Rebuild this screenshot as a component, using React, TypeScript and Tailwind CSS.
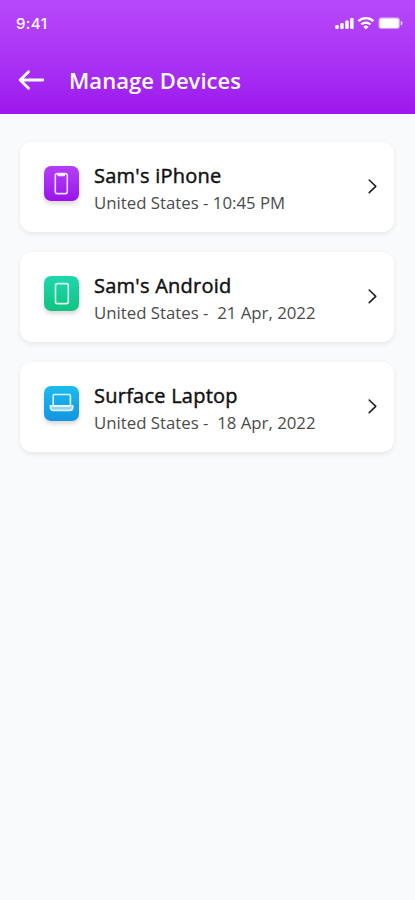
import React from "react";

type DeviceKind = "iphone" | "android" | "laptop";

interface Device {
  name: string;
  details: string;
  kind: DeviceKind;
}

const devices: Device[] = [
  { name: "Sam's iPhone", details: "United States - 10:45 PM", kind: "iphone" },
  { name: "Sam's Android", details: "United States -  21 Apr, 2022", kind: "android" },
  { name: "Surface Laptop", details: "United States -  18 Apr, 2022", kind: "laptop" },
];

const tileColors: Record<DeviceKind, string> = {
  iphone: "from-[#b43df8] to-[#9a10ea]",
  android: "from-[#20d7ae] to-[#10c380]",
  laptop: "from-[#1cbcee] to-[#1494e2]",
};

const StatusBar = () => (
  <div className="flex items-center justify-between pl-4 pr-3 h-[46px] text-white">
    <span className="font-['Inter'] text-[15px] font-medium leading-none tracking-[0.4px]">9:41</span>
    <svg width="70" height="16" viewBox="0 0 70 16" fill="currentColor">
      <rect x="2.3" y="10" width="3.4" height="4" rx="1" />
      <rect x="7.3" y="8" width="3.4" height="6" rx="1" />
      <rect x="12.3" y="5.5" width="3.4" height="8.5" rx="1" />
      <rect x="17.2" y="3" width="3.4" height="11" rx="1" />
      <g fill="none" stroke="currentColor" strokeWidth="2.4">
        <path d="M25.4 6.2a10.6 10.6 0 0 1 15 0" />
        <path d="M28.3 9.5a6.6 6.6 0 0 1 9.2 0" />
      </g>
      <path d="M30.3 11.8a3.6 3.6 0 0 1 5.2 0L32.9 14.6z" />
      <rect x="45.4" y="2.3" width="21.6" height="11.8" rx="3.4" opacity="0.45" />
      <rect x="46.6" y="3.4" width="19.2" height="9.6" rx="1.8" />
      <path d="M67.7 6c2.4.6 2.4 3.8 0 4.4z" opacity="0.75" />
    </svg>
  </div>
);

const Header = () => (
  <header className="h-[114px] bg-gradient-to-b from-[#b748fa] to-[#9d16ee]">
    <StatusBar />
    <div className="flex items-center h-[67px] pl-[18px] gap-6 text-white">
      <svg width="27" height="22" viewBox="0 0 27 22" fill="none" stroke="currentColor" strokeWidth="2.9" strokeLinecap="round" strokeLinejoin="round">
        <path d="M24.8 11H2.2M10.5 2.8L2.2 11l8.3 8.2" />
      </svg>
      <h1 className="text-[22px] font-semibold leading-none tracking-[0.05px]">Manage Devices</h1>
    </div>
  </header>
);

const DeviceIcon = ({ kind }: { kind: DeviceKind }) => (
  <div className={`size-[35px] shrink-0 rounded-[7px] bg-gradient-to-b shadow-[0_3px_4px_rgba(0,0,0,0.15)] ${tileColors[kind]}`}>
    <svg width="35" height="35" viewBox="0 0 35 35" fill="none" stroke="white" strokeWidth="1.6" strokeLinejoin="round" strokeOpacity="0.85">
      {kind === "iphone" && (
        <>
          <rect x="11.3" y="7.6" width="12" height="20" rx="1.8" />
          <path d="M14.3 8.2h6v1.2h-6z" />
        </>
      )}
      {kind === "android" && <rect x="11.5" y="7.6" width="12.8" height="20" rx="1.8" />}
      {kind === "laptop" && (
        <>
          <rect x="9.2" y="8.5" width="17.2" height="11.3" rx="1" />
          <path d="M6.4 19.8h22.4v1.8a2.9 2.9 0 0 1-2.9 2.9H9.3a2.9 2.9 0 0 1-2.9-2.9z" fill="white" fillOpacity="0.55" />
        </>
      )}
    </svg>
  </div>
);

const DeviceCard = ({ device }: { device: Device }) => (
  <li className="flex h-[90px] items-start rounded-xl bg-white pl-6 pr-4 shadow-[0_2px_5px_rgba(0,0,0,0.08)]">
    <div className="mt-6">
      <DeviceIcon kind={device.kind} />
    </div>
    <div className="ml-[15px] mt-[21px] flex-1 whitespace-pre">
      <h2 className="text-xl leading-[26px] tracking-[0.24px] text-[#111] [-webkit-text-stroke:0.45px_#111]">{device.name}</h2>
      <p className="text-[16.8px] leading-[27px] text-[#4b4b4b]">{device.details}</p>
    </div>
    <svg className="mt-9" width="12" height="16" viewBox="0 0 12 16" fill="none" stroke="#222" strokeWidth="1.6" strokeLinecap="round" strokeLinejoin="round">
      <path d="M3.2 2L9.8 8.3l-6.6 6.3" />
    </svg>
  </li>
);

const App = () => {
  return (
    <div className="min-h-[900px] w-full bg-[#f8fafc] font-['Open_Sans',sans-serif]">
      <Header />
      <ul className="flex flex-col gap-5 pl-5 pr-[21px] pt-7">
        {devices.map((device) => (
          <DeviceCard key={device.name} device={device} />
        ))}
      </ul>
    </div>
  );
};

export default App;
